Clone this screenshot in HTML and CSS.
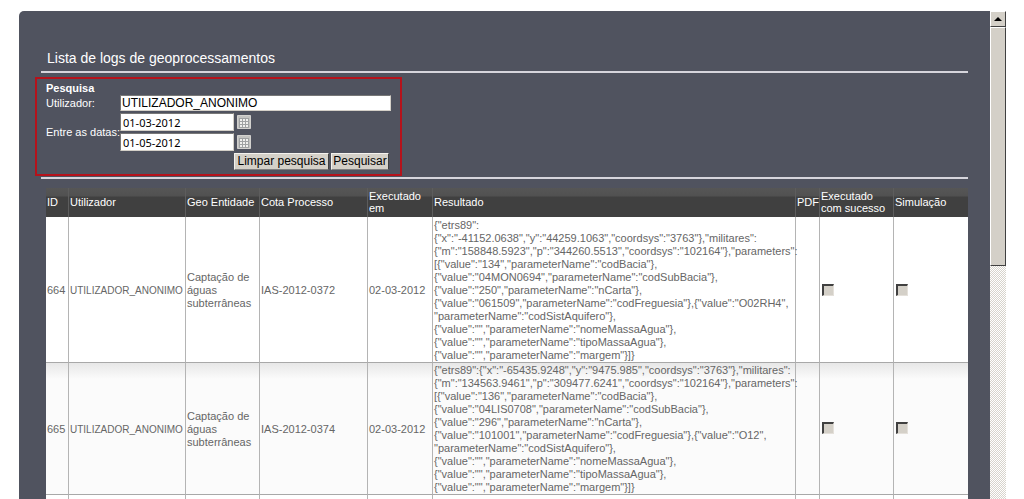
FILE: index.html
```html
<!DOCTYPE html>
<html lang="pt">
<head>
<meta charset="utf-8">
<title>Lista de logs de geoprocessamentos</title>
<link rel="stylesheet" href="styles.css">
</head>
<body>
<div class="app">
  <main class="panel">
    <h1 class="title">Lista de logs de geoprocessamentos</h1>
    <form class="search">
      <h2 class="legend">Pesquisa</h2>
      <div class="row">
        <label class="label" for="user">Utilizador:</label>
        <input class="user" id="user" type="text" value="UTILIZADOR_ANONIMO">
      </div>
      <div class="row">
        <label class="label" for="from">Entre as datas:</label>
        <div class="dates">
          <div class="date-line">
            <input class="date" id="from" type="text" value="01-03-2012">
            <button class="cal" type="button" aria-label="Data inicial"><svg viewBox="0 0 14 14" width="14" height="14"><path fill="#c3c3c1" stroke="#d2d1ce" d="M.5.5h13v13H.5z"/><path fill="#f0f0ee" d="M2 3h10v9H2z"/><path fill="none" stroke="#a0a2a3" d="M2 3.5h10M2 6.5h10M2 9.5h10M2 12.5h10M2.5 3v9M5.5 3v9M8.5 3v9M11.5 3v9"/></svg></button>
          </div>
          <div class="date-line">
            <input class="date" type="text" value="01-05-2012" aria-label="Data final">
            <button class="cal" type="button" aria-label="Data final"><svg viewBox="0 0 14 14" width="14" height="14"><path fill="#c3c3c1" stroke="#d2d1ce" d="M.5.5h13v13H.5z"/><path fill="#f0f0ee" d="M2 3h10v9H2z"/><path fill="none" stroke="#a0a2a3" d="M2 3.5h10M2 6.5h10M2 9.5h10M2 12.5h10M2.5 3v9M5.5 3v9M8.5 3v9M11.5 3v9"/></svg></button>
          </div>
        </div>
      </div>
      <div class="actions">
        <button class="btn btn-clear" type="reset">Limpar pesquisa</button>
        <button class="btn btn-search" type="button">Pesquisar</button>
      </div>
    </form>
    <div class="rule"></div>
    <table class="logs">
      <colgroup><col class="c-id"><col class="c-user"><col class="c-geo"><col class="c-cota"><col class="c-exec"><col><col class="c-pdf"><col class="c-check"><col class="c-check"></colgroup>
      <thead>
        <tr><th>ID</th><th>Utilizador</th><th>Geo Entidade</th><th>Cota Processo</th><th>Executado<br>em</th><th>Resultado</th><th>PDF</th><th>Executado<br>com sucesso</th><th>Simulação</th></tr>
      </thead>
      <tbody>
        <tr>
          <td>664</td><td class="name">UTILIZADOR_ANONIMO</td><td>Captação de<br>águas<br>subterrâneas</td><td>IAS-2012-0372</td><td>02-03-2012</td>
          <td>{"etrs89":<br>{"x":"-41152.0638","y":"44259.1063","coordsys":"3763"},"militares":<br>{"m":"158848.5923","p":"344260.5513","coordsys":"102164"},"parameters":<br>[{"value":"134","parameterName":"codBacia"},<br>{"value":"04MON0694","parameterName":"codSubBacia"},<br>{"value":"250","parameterName":"nCarta"},<br>{"value":"061509","parameterName":"codFreguesia"},{"value":"O02RH4",<br>"parameterName":"codSistAquifero"},<br>{"value":"","parameterName":"nomeMassaAgua"},<br>{"value":"","parameterName":"tipoMassaAgua"},<br>{"value":"","parameterName":"margem"}]}</td>
          <td></td>
          <td><input class="check" type="checkbox" disabled aria-label="Executado com sucesso"></td>
          <td><input class="check" type="checkbox" disabled aria-label="Simulação"></td>
        </tr>
        <tr>
          <td>665</td><td class="name">UTILIZADOR_ANONIMO</td><td>Captação de<br>águas<br>subterrâneas</td><td>IAS-2012-0374</td><td>02-03-2012</td>
          <td>{"etrs89":{"x":"-65435.9248","y":"9475.985","coordsys":"3763"},"militares":<br>{"m":"134563.9461","p":"309477.6241","coordsys":"102164"},"parameters":<br>[{"value":"136","parameterName":"codBacia"},<br>{"value":"04LIS0708","parameterName":"codSubBacia"},<br>{"value":"296","parameterName":"nCarta"},<br>{"value":"101001","parameterName":"codFreguesia"},{"value":"O12",<br>"parameterName":"codSistAquifero"},<br>{"value":"","parameterName":"nomeMassaAgua"},<br>{"value":"","parameterName":"tipoMassaAgua"},<br>{"value":"","parameterName":"margem"}]}</td>
          <td></td>
          <td><input class="check" type="checkbox" disabled aria-label="Executado com sucesso"></td>
          <td><input class="check" type="checkbox" disabled aria-label="Simulação"></td>
        </tr>
        <tr class="next"><td></td><td></td><td></td><td></td><td></td><td></td><td></td><td></td><td></td></tr>
      </tbody>
    </table>
  </main>
  <div class="scroll">
    <button class="scroll-up" type="button" aria-label="Subir"><svg viewBox="0 0 8 4" width="8" height="4"><path d="M4 0l4 4H0z"/></svg></button>
    <div class="thumb"></div>
  </div>
</div>
</body>
</html>
```
FILE: styles.css
```css
* { box-sizing: border-box; }
body {
  margin: 0;
  height: 100vh;
  overflow: hidden;
  background: #fff;
  font: 11px/13px "Liberation Sans", Arial, sans-serif;
}
.app { display: flex; height: 100vh; padding: 11px 18px 0 19px; }
.panel {
  flex: 1;
  min-width: 0;
  overflow: hidden;
  padding: 37px 22px 0 16px;
  background: #50535f;
  border-radius: 5px 0 0 0;
  color: #fff;
}
.title {
  margin: 0 0 4px 6px;
  padding: 0 6px 3px;
  border-bottom: 2px solid #d6d5dc;
  font-size: 14px;
  line-height: 20px;
  font-weight: normal;
}
.search {
  width: 367px;
  padding: 2px 9px 4px;
  border: 2px solid #b5121b;
}
.legend { margin: 0; font-size: 11px; line-height: 14px; }
.row { display: flex; align-items: center; margin-bottom: 2px; }
.label { width: 74px; flex: none; white-space: nowrap; }
.user, .date {
  border: 1px solid #d4d0c8;
  border-top-color: #777;
  border-left-color: #777;
  border-radius: 0;
  background: #fff;
  color: #000;
}
.user {
  flex: 1;
  min-width: 0;
  height: 16px;
  padding: 0 1px;
  font: 12px/14px "Liberation Sans", Arial, sans-serif;
}
.dates { display: flex; flex-direction: column; gap: 2px; }
.date-line { display: flex; align-items: center; gap: 3px; }
.date {
  width: 114px;
  height: 18px;
  padding: 0 2px;
  font: 11px/16px "Noto Sans", sans-serif;
}
.cal { width: 14px; height: 14px; padding: 0; border: 0; background: none; }
.cal svg { display: block; }
.actions { display: flex; justify-content: flex-end; gap: 2px; padding-right: 2px; }
.btn {
  height: 17px;
  padding: 0;
  border: 1px solid #f4f2ee;
  border-right-color: #404040;
  border-bottom-color: #808080;
  background: #d4d0c8;
  color: #000;
  font: 12px/15px "Liberation Sans", Arial, sans-serif;
  white-space: nowrap;
}
.btn-clear { width: 95px; }
.btn-search { width: 58px; }
.rule { height: 2px; margin: 1px 0 9px 6px; background: #d6d5dc; }
.logs {
  width: calc(100% - 11px);
  margin-left: 11px;
  table-layout: fixed;
  border-collapse: separate;
  border-spacing: 0;
  color: #666;
  background: #fff;
}
.c-id { width: 23px; }
.c-user { width: 117px; }
.c-geo { width: 74px; }
.c-cota { width: 108px; }
.c-exec { width: 65px; }
.c-pdf { width: 24px; }
.c-check { width: 74px; }
.logs th {
  height: 29px;
  padding: 1px 0 2px 1px;
  border-right: 1px solid #5d5d5d;
  background: linear-gradient(#565656 0, #515151 8px, #404040 9px, #404040 100%);
  color: #fff;
  font-weight: normal;
  line-height: 12px;
  text-align: left;
  white-space: nowrap;
}
.logs td {
  padding: 2px 0 0 1px;
  border-right: 1px solid #b4b4b4;
  border-bottom: 1px solid #a8a8a8;
  white-space: nowrap;
  vertical-align: middle;
}
.logs .name { font-size: 10px; }
.logs th:last-child, .logs td:last-child { border-right: 0; }
.logs tbody tr:nth-child(even) td {
  padding-top: 1px;
  background: linear-gradient(#e7e7e7 0, #fbfbfb 16px, #fbfbfb 100%);
}
.logs .next td { height: 60px; }
.check {
  appearance: none;
  display: block;
  width: 12px;
  height: 12px;
  margin: 0 0 2px 1px;
  border: 2px solid #404040;
  border-right: 1px solid #e4e0da;
  border-bottom: 1px solid #e4e0da;
  background: #d4d0c8;
}
.scroll {
  display: flex;
  flex-direction: column;
  width: 16px;
  background: repeating-conic-gradient(#fff 0 25%, #d8d4cc 0 50%) 0 0 / 2px 2px;
}
.scroll-up, .thumb {
  border: 1px solid #fff;
  border-right-color: #404040;
  border-bottom-color: #404040;
  background: #d4d0c8;
}
.scroll-up {
  display: flex;
  align-items: center;
  justify-content: center;
  height: 16px;
  padding: 0;
}
.thumb { height: 49%; }
```
